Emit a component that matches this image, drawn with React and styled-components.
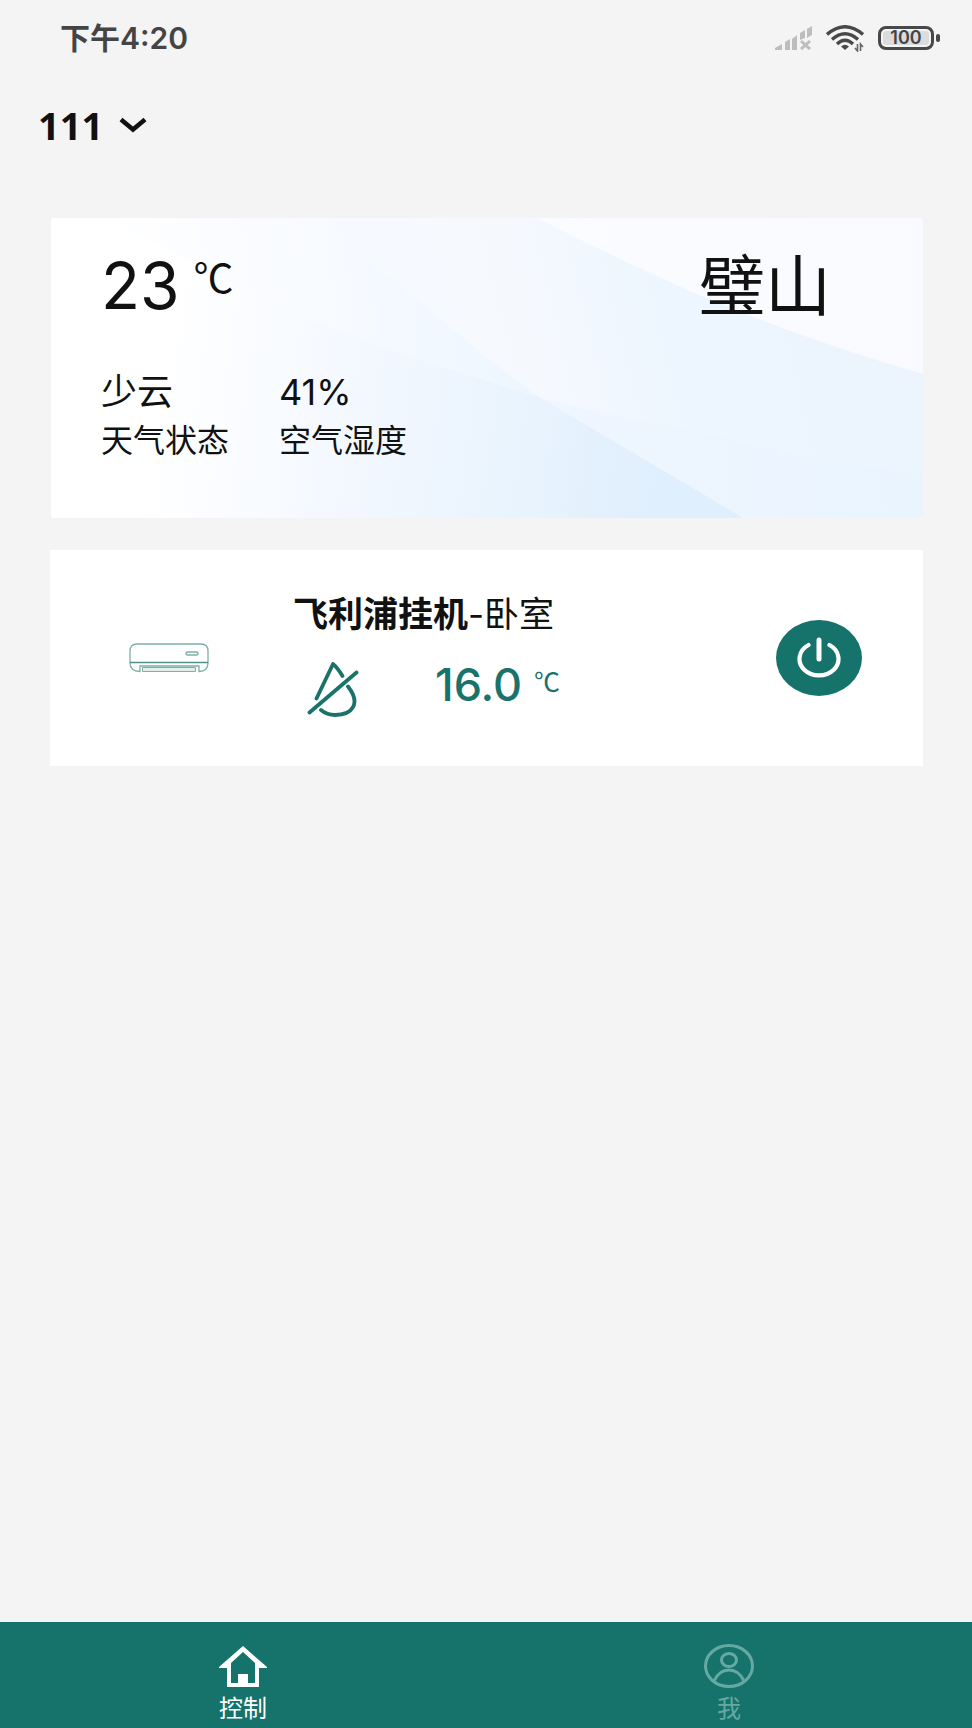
import React, { useState } from 'react'
import styled, { createGlobalStyle } from 'styled-components'

export default function App() {
  const [tab, setTab] = useState('control')
  const [power, setPower] = useState(true)
  return (
    <>
      <GlobalStyle />
      <Page>
        <StatusBar>
          <time>下午4:20</time>
          <StatusIcons>
            <SignalIcon />
            <WifiIcon />
            <Battery>
              <BatteryLevel>100</BatteryLevel>
            </Battery>
          </StatusIcons>
        </StatusBar>
        <Header>
          <HomeButton type='button' aria-haspopup='listbox'>
            111
            <ChevronIcon />
          </HomeButton>
        </Header>
        <Main>
          <WeatherCard>
            <WeatherBackground />
            <WeatherTop>
              <Temperature>
                23<Unit>℃</Unit>
              </Temperature>
              <City>璧山</City>
            </WeatherTop>
            <WeatherStats>
              <Stat>
                <dd>少云</dd>
                <dt>天气状态</dt>
              </Stat>
              <Stat>
                <dd>41%</dd>
                <dt>空气湿度</dt>
              </Stat>
            </WeatherStats>
          </WeatherCard>
          <DeviceCard>
            <AirConditionerIcon />
            <DeviceInfo>
              <DeviceName>
                <b>飞利浦挂机</b>-卧室
              </DeviceName>
              <DeviceState>
                <DropOffIcon />
                <TargetTemp>
                  16.0<SmallUnit>℃</SmallUnit>
                </TargetTemp>
              </DeviceState>
            </DeviceInfo>
            <PowerButton
              type='button'
              aria-label='电源'
              aria-pressed={power}
              onClick={() => setPower(!power)}
            >
              <PowerIcon />
            </PowerButton>
          </DeviceCard>
        </Main>
        <TabBar>
          <TabLink
            href='#control'
            $active={tab === 'control'}
            onClick={() => setTab('control')}
          >
            <HouseIcon />
            控制
          </TabLink>
          <TabLink
            href='#me'
            $active={tab === 'me'}
            onClick={() => setTab('me')}
          >
            <UserIcon />我
          </TabLink>
        </TabBar>
      </Page>
    </>
  )
}

const SignalIcon = () => (
  <svg width='37' height='24' viewBox='0 0 37 24' fill='#bdbdbd'>
    <path d='M0 24v-2l7-4v6zM10 16l5-3v11h-5zM17 13l5-4v15h-5zM25 7l5-3v8l-5 2zM32 3l5-3v9l-5 3z' />
    <path d='m26 15 9 8m0-8-9 8' stroke='#bdbdbd' strokeWidth='3' />
  </svg>
)

const WifiIcon = () => (
  <svg width='38' height='27' viewBox='0 0 38 27' fill='none'>
    <g stroke='#484848' strokeWidth='3.4'>
      <path d='M1 9.5Q19-6 37 9.5' />
      <path d='M6 14.5Q19 3 32 14.5' />
      <path d='M11 19Q19 11.500 27 19' />
    </g>
    <path d='M15 21.500Q19 18 23 21.500L19 25z' fill='#484848' />
    <path
      d='M31.500 19v7l-2.500-3m5.500 3v-7l2.500 3'
      stroke='#666'
      strokeWidth='1.600'
    />
  </svg>
)

const ChevronIcon = () => (
  <svg width='28' height='16' viewBox='0 0 28 16' fill='none'>
    <path d='M2 2.500 14 12.500 26 2.500' stroke='#111' strokeWidth='4.500' />
  </svg>
)

const WeatherBackground = () => (
  <Backdrop viewBox='0 0 870 302' preserveAspectRatio='none' aria-hidden='true'>
    <defs>
      <linearGradient id='sky' x1='0' y1='0' x2='1' y2='0'>
        <stop offset='0' stopColor='#fff' />
        <stop offset='0.35' stopColor='#f7fbff' />
        <stop offset='0.6' stopColor='#fafcff' />
        <stop offset='1' stopColor='#f9faff' />
      </linearGradient>
      <linearGradient
        id='wave'
        gradientUnits='userSpaceOnUse'
        x1='380'
        y1='120'
        x2='720'
        y2='40'
      >
        <stop offset='0' stopColor='#f6f9ff' />
        <stop offset='0.3' stopColor='#f5f9fe' />
        <stop offset='0.6' stopColor='#eef6fe' />
        <stop offset='1' stopColor='#ecf5fe' />
      </linearGradient>
      <linearGradient
        id='slope'
        gradientUnits='userSpaceOnUse'
        x1='60'
        y1='150'
        x2='480'
        y2='100'
      >
        <stop offset='0' stopColor='#fff' />
        <stop offset='0.55' stopColor='#f7faff' />
        <stop offset='1' stopColor='#ecf6ff' />
      </linearGradient>
      <linearGradient
        id='hill'
        gradientUnits='userSpaceOnUse'
        x1='100'
        y1='220'
        x2='600'
        y2='290'
      >
        <stop offset='0' stopColor='#fff' />
        <stop offset='0.4' stopColor='#f3f8ff' />
        <stop offset='0.75' stopColor='#e8f3fd' />
        <stop offset='1' stopColor='#e0effd' />
      </linearGradient>
      <linearGradient id='shore' x1='0' y1='0' x2='1' y2='0'>
        <stop offset='0' stopColor='#eff6ff' />
        <stop offset='1' stopColor='#e9f4fe' />
      </linearGradient>
    </defs>
    <path d='M0 0H870V302H0z' fill='url(#sky)' />
    <path
      d='M275 0H485Q560 39 641 75 750 122 870 157V302H691L488 181 438 143 348 68z'
      fill='url(#wave)'
    />
    <path d='M488 181Q560 200 628 211 760 246 870 258V302H691z' fill='url(#shore)' />
    <path d='M0 0H275L348 68 438 143 488 181 691 302H0z' fill='url(#slope)' />
    <path
      d='M60 0Q180 70 288 114 380 148 488 181L691 302H0V0z'
      fill='url(#hill)'
    />
  </Backdrop>
)

const AirConditionerIcon = () => (
  <svg width='80' height='30' viewBox='0 0 80 30' fill='none' stroke='#7fb0aa'>
    <path
      d='M8 1H72Q79 1 79 8V20Q79 28 70 28.500V23H11V28.500Q1 28 1 20V8Q1 1 8 1z'
      strokeWidth='1.300'
    />
    <path d='M1 19.500H79' stroke='#4f928b' strokeWidth='1.400' />
    <path d='M13.500 28.500v-4h53v4z' fill='#e1efed' />
    <rect x='57' y='9' width='12' height='3' rx='1.500' strokeWidth='1.500' />
  </svg>
)

const DropOffIcon = () => (
  <svg
    width='52'
    height='56'
    viewBox='0 0 52 56'
    fill='none'
    stroke='#19736b'
    strokeWidth='3.800'
    strokeLinecap='round'
    strokeLinejoin='round'
  >
    <path d='M9.500 37.500 26 3Q30 6 35.500 15' />
    <path d='M41 25.500C54 42 46 54 28 54Q20 54 14 49' />
    <path d='M2.500 51.500 49.500 11.500' />
  </svg>
)

const PowerIcon = () => (
  <svg
    width='44'
    height='42'
    viewBox='0 0 44 42'
    fill='none'
    stroke='#fff'
    strokeLinecap='round'
  >
    <path d='M11.500 8A19.500 16.500 0 1 0 32.500 8' strokeWidth='4.200' />
    <path d='M22 3V22' strokeWidth='5' />
  </svg>
)

const HouseIcon = () => (
  <svg width='48' height='42' viewBox='0 0 48 42' fill='none'>
    <path
      d='M24 0 48 21V22H40V41H8V22H0V21zM24 6 12 17V37H19V28H29V37H36V17z'
      fill='#fff'
      fillRule='evenodd'
    />
    <path d='M19 28H29V39H19z' fill='#fff' />
  </svg>
)

const UserIcon = () => (
  <svg
    width='50'
    height='44'
    viewBox='0 0 50 44'
    fill='none'
    stroke='#67a9a2'
    strokeWidth='3'
  >
    <ellipse cx='25' cy='22' rx='23.500' ry='20.500' />
    <ellipse cx='25' cy='16' rx='7.500' ry='6.500' />
    <path d='M10 37Q15 26 25 26T40 37' />
  </svg>
)

const GlobalStyle = createGlobalStyle`
  * {
    box-sizing: border-box;
  }
  body {
    margin: 0;
    background: #f4f4f4;
    color: #111;
    font-family: Inter, 'Noto Sans CJK SC', sans-serif;
  }
  svg {
    display: block;
    flex-shrink: 0;
  }
  button {
    border: 0;
    padding: 0;
    font: inherit;
    color: inherit;
    cursor: pointer;
  }
`

const Page = styled.div`
  display: flex;
  flex-direction: column;
  min-height: 100vh;
`

const StatusBar = styled.div`
  display: flex;
  justify-content: space-between;
  align-items: center;
  height: 76px;
  padding: 0 32px 0 60px;
  font-size: 30px;
  font-weight: 600;
  line-height: 36px;
  color: #444;
`

const StatusIcons = styled.div`
  display: flex;
  align-items: center;
  gap: 14px;
`

const Battery = styled.div`
  display: flex;
  align-items: center;
  gap: 2px;

  &::after {
    content: '';
    width: 4px;
    height: 8px;
    border-radius: 2px;
    background: #484848;
  }
`

const BatteryLevel = styled.span`
  width: 56px;
  height: 24px;
  border: 3px solid #484848;
  border-radius: 8px;
  background: #dcdcdc;
  box-shadow: inset 0 0 0 2px #f4f4f4;
  font-size: 18px;
  line-height: 18px;
  text-align: center;
`

const Header = styled.header`
  display: flex;
  align-items: center;
  height: 98px;
  padding: 0 38px;
`

const HomeButton = styled.button`
  display: flex;
  align-items: center;
  gap: 16px;
  background: none;
  font-family: 'Noto Sans', sans-serif;
  font-size: 38px;
  font-weight: 700;
  line-height: 48px;
`

const Main = styled.main`
  display: flex;
  flex: 1;
  flex-direction: column;
  gap: 32px;
  padding: 44px 49px 44px 50px;
`

const WeatherCard = styled.section`
  position: relative;
  padding: 32px 92px 56px 50px;
  margin-left: 1px;
  border-radius: 4px;
  overflow: hidden;
`

const Backdrop = styled.svg`
  position: absolute;
  inset: 0;
  z-index: -1;
  width: 100%;
  height: 100%;
`

const WeatherTop = styled.div`
  display: flex;
  justify-content: space-between;
  height: 72px;
  line-height: 72px;
`

const Temperature = styled.div`
  display: flex;
  gap: 14px;
  font-size: 64px;
`

const Unit = styled.span`
  font-family: 'Noto Sans CJK SC', sans-serif;
  font-size: 40px;
  line-height: 52px;
`

const City = styled.div`
  font-size: 66px;
`

const WeatherStats = styled.dl`
  display: flex;
  gap: 50px;
  margin: 42px 0 0;
`

const Stat = styled.div`
  display: flex;
  flex-direction: column;

  dd {
    margin: 0;
    font-size: 36px;
    line-height: 56px;
  }
  dt {
    font-size: 32px;
    line-height: 42px;
  }
`

const DeviceCard = styled.section`
  display: flex;
  align-items: center;
  height: 216px;
  padding: 0 61px 0 79px;
  background: #fff;
`

const DeviceInfo = styled.div`
  flex: 1;
  padding-left: 84px;
`

const DeviceName = styled.h2`
  margin: 0;
  font-size: 35px;
  font-weight: 400;
  line-height: 62px;
`

const DeviceState = styled.div`
  display: flex;
  align-items: center;
  gap: 76px;
  height: 88px;
  padding-left: 14px;
  color: #19736b;
`

const TargetTemp = styled.div`
  display: flex;
  align-items: center;
  gap: 12px;
  padding-bottom: 8px;
  font-size: 45px;
  font-weight: 500;
  line-height: 56px;
`

const SmallUnit = styled.span`
  font-family: 'Noto Sans CJK SC', sans-serif;
  font-size: 26px;
  font-weight: 400;
  line-height: 48px;
  align-self: flex-start;
`

const PowerButton = styled.button`
  display: flex;
  align-items: center;
  justify-content: center;
  width: 86px;
  height: 76px;
  border-radius: 50%;
  background: #15736b;
`

const TabBar = styled.nav`
  display: flex;
  height: 106px;
  background: #15736b;
`

const TabLink = styled.a`
  display: flex;
  flex: 1;
  flex-direction: column;
  align-items: center;
  justify-content: flex-end;
  gap: 4px;
  padding-bottom: 2px;
  font-size: 24px;
  line-height: 34px;
  text-decoration: none;
  color: ${(props) => (props.$active ? '#fff' : '#67a9a2')};
`
